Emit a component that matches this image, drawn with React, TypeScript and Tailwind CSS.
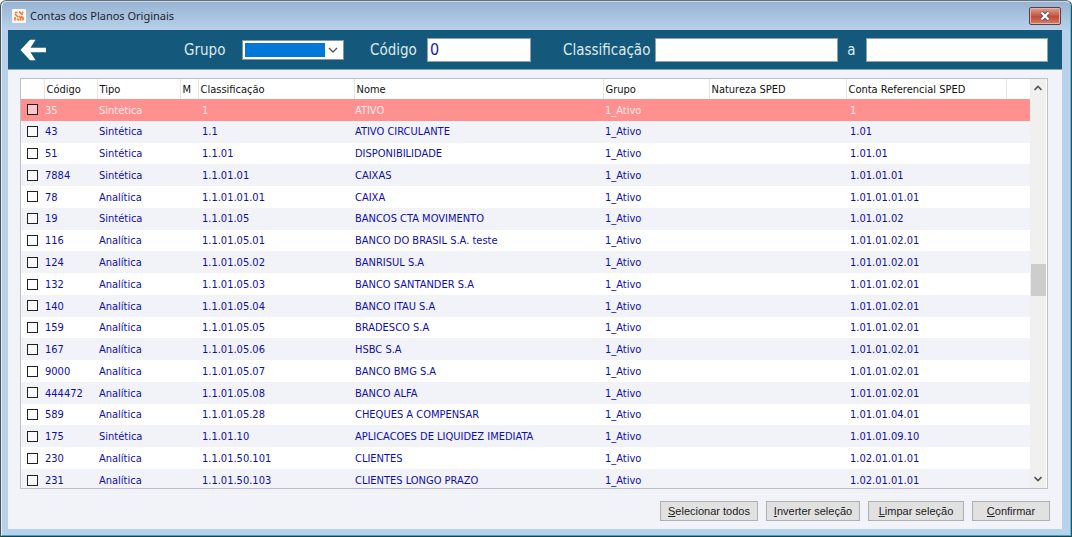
import { useState } from "react";

type Conta = [codigo: string, tipo: string, classificacao: string, nome: string, referencial: string];

const contas: Conta[] = [
  ["35", "Sintética", "1", "ATIVO", "1"],
  ["43", "Sintética", "1.1", "ATIVO CIRCULANTE", "1.01"],
  ["51", "Sintética", "1.1.01", "DISPONIBILIDADE", "1.01.01"],
  ["7884", "Sintética", "1.1.01.01", "CAIXAS", "1.01.01.01"],
  ["78", "Analítica", "1.1.01.01.01", "CAIXA", "1.01.01.01.01"],
  ["19", "Sintética", "1.1.01.05", "BANCOS CTA MOVIMENTO", "1.01.01.02"],
  ["116", "Analítica", "1.1.01.05.01", "BANCO DO BRASIL S.A. teste", "1.01.01.02.01"],
  ["124", "Analítica", "1.1.01.05.02", "BANRISUL S.A", "1.01.01.02.01"],
  ["132", "Analítica", "1.1.01.05.03", "BANCO SANTANDER S.A", "1.01.01.02.01"],
  ["140", "Analítica", "1.1.01.05.04", "BANCO ITAU S.A", "1.01.01.02.01"],
  ["159", "Analítica", "1.1.01.05.05", "BRADESCO S.A", "1.01.01.02.01"],
  ["167", "Analítica", "1.1.01.05.06", "HSBC S.A", "1.01.01.02.01"],
  ["9000", "Analítica", "1.1.01.05.07", "BANCO BMG S.A", "1.01.01.02.01"],
  ["444472", "Analítica", "1.1.01.05.08", "BANCO ALFA", "1.01.01.02.01"],
  ["589", "Analítica", "1.1.01.05.28", "CHEQUES A COMPENSAR", "1.01.01.04.01"],
  ["175", "Sintética", "1.1.01.10", "APLICACOES DE LIQUIDEZ IMEDIATA", "1.01.01.09.10"],
  ["230", "Analítica", "1.1.01.50.101", "CLIENTES", "1.02.01.01.01"],
  ["231", "Analítica", "1.1.01.50.103", "CLIENTES LONGO PRAZO", "1.02.01.01.01"],
];

const headers = ["Código", "Tipo", "M", "Classificação", "Nome", "Grupo", "Natureza SPED", "Conta Referencial SPED"];

function TitleBar() {
  return (
    <header className="flex h-7 shrink-0 items-center gap-1 pr-px pl-1">
      <svg viewBox="0 0 14 14" className="size-3.5" aria-hidden="true">
        <rect width="14" height="14" rx="1" fill="#fff9f5" />
        <g stroke="#f4742f" strokeWidth="1.600" fill="none">
          <path d="M3 3.500h2.500M7 2.500l3.500 3.500M10.500 2.500v2M3 5l3 3M3 8v3.500M5 9.500l2 2M7 7l1.500 1.500v3M9 7.500l2 1.500v2.500" />
        </g>
      </svg>
      <h1 className="flex-1 font-['Noto_Sans',sans-serif] text-[11px] text-[#1b2530]">Contas dos Planos Originais</h1>
      <button
        type="button"
        aria-label="Fechar"
        className="flex h-[18px] w-8 items-center justify-center rounded-xs border border-[#5b3c4c] bg-linear-to-b from-[#dfa096] via-[#c04a35] via-55% to-[#d57f68] shadow-[inset_0_0_0_1px_#e6b3a8]"
      >
        <svg viewBox="0 0 12 10" className="h-2.5 w-3" aria-hidden="true">
          <path d="M2.500 1.500l7 7M9.500 1.500l-7 7" stroke="#5b5560" strokeWidth="4" />
          <path d="M2.500 1.500l7 7M9.500 1.500l-7 7" stroke="#fff" strokeWidth="2.200" />
        </svg>
      </button>
    </header>
  );
}

function FilterBar() {
  const label = "shrink-0 pt-0.5 text-[15px] text-[#dfeaf0]";
  const input = "h-6 border border-[#8fa3ad] bg-white px-0.5 text-base text-[#1a1aa6] outline-none";
  return (
    <form className="flex h-10 shrink-0 items-center border-b border-[#7fa5b8] bg-[#14597b] pr-3.5 pl-3 font-['DejaVu_Sans_Condensed','DejaVu_Sans',sans-serif]">
      <button type="button" aria-label="Voltar" className="mr-[138px] shrink-0">
        <svg viewBox="0 0 26 22" className="h-[22px] w-[26px]" aria-hidden="true">
          <path d="M.5 11L10 .8H15.500L10.500 8.800H26V13.200H10.500L15.500 21.200H10Z" fill="#fff" />
        </svg>
      </button>
      <label htmlFor="grupo" className={label + " w-[58px]"}>Grupo</label>
      <div className="mr-[26px] flex h-5 w-[102px] shrink-0 items-center border border-[#8a9499] bg-white p-0.5">
        <select id="grupo" className="h-3.5 w-20 appearance-none bg-[#0078d7] outline-none" />
        <svg viewBox="0 0 10 6" className="mx-auto h-1.5 w-2.5" aria-hidden="true">
          <path d="M1 1l4 4 4-4" fill="none" stroke="#555" strokeWidth="1.300" />
        </svg>
      </div>
      <label htmlFor="codigo" className={label + " w-[57px]"}>Código</label>
      <input id="codigo" defaultValue="0" className={input + " mr-8 w-[104px] shrink-0"} />
      <label htmlFor="de" className={label + " w-[92px]"}>Classificação</label>
      <input id="de" className={input + " min-w-0 flex-1"} />
      <label htmlFor="ate" className={label + " w-7 text-center"}>a</label>
      <input id="ate" className={input + " min-w-0 flex-1"} />
    </form>
  );
}

function ScrollBar() {
  return (
    <div className="mr-px flex w-4 shrink-0 flex-col items-center bg-[#f0f0f0] py-1.5">
      <svg viewBox="0 0 8 6" className="h-1.5 w-2" aria-hidden="true">
        <path d="M.5 5L4 1.500 7.500 5" fill="none" stroke="#555" strokeWidth="1.600" />
      </svg>
      <div className="flex-[171]" />
      <div className="h-8 w-[15px] bg-[#cdcdcd]" />
      <div className="flex-[178]" />
      <svg viewBox="0 0 8 6" className="h-1.5 w-2" aria-hidden="true">
        <path d="M.5 1L4 4.500 7.500 1" fill="none" stroke="#555" strokeWidth="1.600" />
      </svg>
    </div>
  );
}

export default function App() {
  const [selected, setSelected] = useState<string[]>([]);
  const codigos = contas.map(([codigo]) => codigo);

  const toggle = (codigo: string) =>
    setSelected(selected.includes(codigo) ? selected.filter((c) => c !== codigo) : [...selected, codigo]);

  const actions = [
    { text: "Selecionar todos", width: "w-[98px]", run: () => setSelected(codigos) },
    { text: "Inverter seleção", width: "w-[94px]", run: () => setSelected(codigos.filter((c) => !selected.includes(c))) },
    { text: "Limpar seleção", width: "w-24", run: () => setSelected([]) },
    { text: "Confirmar", width: "w-[78px]", run: () => {} },
  ];

  return (
    <div className="flex h-screen flex-col rounded-t-md border border-t-[#66717c] border-r-[#1d5560] border-b-[#12464f] border-l-[#4c5258] bg-[#b9d1ea]">
      <div className="flex min-h-0 flex-1 flex-col rounded-t-md border border-t-[#c9d9e8] border-r-[#4fc3dc] border-b-[#3fa9bf] border-l-[#e4eef8] bg-linear-to-b from-[#98b4d2] to-[#b9d1ea] to-[28px] pr-2 pb-1.5 pl-1.5">
        <TitleBar />
        <main className="flex min-h-0 flex-1 flex-col bg-[#f2f3f9]">
          <FilterBar />
          <div className="mt-2 mr-3.5 ml-3 flex min-h-0 flex-1 border border-[#bfc0c6] bg-white font-['DejaVu_Sans_Condensed','DejaVu_Sans',sans-serif] text-[11px]">
            <div className="min-w-0 flex-1 overflow-hidden">
              <table className="h-[412px] w-full table-fixed border-collapse text-left whitespace-nowrap">
                <colgroup>
                  <col className="w-[23px]" />
                  <col className="w-[53px]" />
                  <col className="w-[83px]" />
                  <col className="w-[18px]" />
                  <col className="w-[156px]" />
                  <col />
                  <col className="w-[106px]" />
                  <col className="w-[137px]" />
                  <col className="w-40" />
                  <col className="w-6" />
                </colgroup>
                <thead>
                  <tr className="h-5 text-[#111]">
                    <td />
                    {headers.map((h) => (
                      <th key={h} className="border-l border-[#e6e6e6] p-0 pt-0.5 pl-0.5 font-normal">{h}</th>
                    ))}
                    <td className="border-l border-[#e6e6e6]" />
                  </tr>
                </thead>
                <tbody>
                  {contas.map(([codigo, tipo, classificacao, nome, referencial], i) => (
                    <tr
                      key={codigo}
                      className={i === 0 ? "bg-[#ff9090] text-[#ffe9e9]" : "text-[#0e0ea8] odd:bg-white even:bg-[#f2f3f9]"}
                    >
                      <td className="p-0 pl-1.5">
                        <input
                          type="checkbox"
                          aria-label={nome}
                          checked={selected.includes(codigo)}
                          onChange={() => toggle(codigo)}
                          className="block size-[11px] appearance-none border border-[#222] bg-white/50 checked:bg-[#222]"
                        />
                      </td>
                      <td className="p-0 pt-0.5 pl-px">{codigo}</td>
                      <td className="p-0 pt-0.5 pl-0.5">{tipo}</td>
                      <td />
                      <td className="p-0 pt-0.5 pl-1">{classificacao}</td>
                      <td className="p-0 pt-0.5 pl-px">{nome}</td>
                      <td className="p-0 pt-0.5 pl-0.5">1_Ativo</td>
                      <td />
                      <td className="p-0 pt-0.5 pl-1">{referencial}</td>
                      <td />
                    </tr>
                  ))}
                </tbody>
              </table>
            </div>
            <ScrollBar />
          </div>
          <footer className="flex shrink-0 justify-end gap-2 pt-3 pr-3 pb-2 font-['Liberation_Sans',sans-serif] text-[11px] text-[#222]">
            {actions.map(({ text, width, run }) => (
              <button
                key={text}
                type="button"
                onClick={run}
                className={"h-5 border border-[#b0b0b0] bg-[#e1e1e1] leading-4 whitespace-nowrap " + width}
              >
                <span className="underline">{text[0]}</span>
                {text.slice(1)}
              </button>
            ))}
          </footer>
        </main>
      </div>
    </div>
  );
}
